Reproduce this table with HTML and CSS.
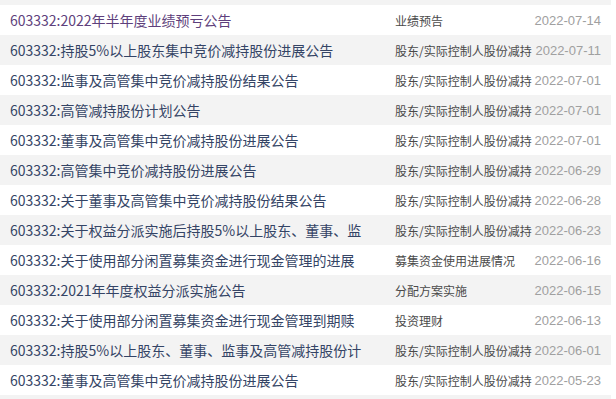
FILE: index.html
```html
<!DOCTYPE html>
<html lang="zh-CN">
<head>
<meta charset="utf-8">
<title>公告列表</title>
<link rel="stylesheet" href="styles.css">
</head>
<body>
<ul class="notice-list">
  <li class="notice"><a class="title visited">603332:2022年半年度业绩预亏公告</a><span class="cat">业绩预告</span><span class="date">2022-07-14</span></li>
  <li class="notice"><a class="title">603332:持股5%以上股东集中竞价减持股份进展公告</a><span class="cat">股东/实际控制人股份减持</span><span class="date">2022-07-11</span></li>
  <li class="notice"><a class="title">603332:监事及高管集中竞价减持股份结果公告</a><span class="cat">股东/实际控制人股份减持</span><span class="date">2022-07-01</span></li>
  <li class="notice"><a class="title">603332:高管减持股份计划公告</a><span class="cat">股东/实际控制人股份减持</span><span class="date">2022-07-01</span></li>
  <li class="notice"><a class="title">603332:董事及高管集中竞价减持股份进展公告</a><span class="cat">股东/实际控制人股份减持</span><span class="date">2022-07-01</span></li>
  <li class="notice"><a class="title">603332:高管集中竞价减持股份进展公告</a><span class="cat">股东/实际控制人股份减持</span><span class="date">2022-06-29</span></li>
  <li class="notice"><a class="title">603332:关于董事及高管集中竞价减持股份结果公告</a><span class="cat">股东/实际控制人股份减持</span><span class="date">2022-06-28</span></li>
  <li class="notice"><a class="title">603332:关于权益分派实施后持股5%以上股东、董事、监</a><span class="cat">股东/实际控制人股份减持</span><span class="date">2022-06-23</span></li>
  <li class="notice"><a class="title">603332:关于使用部分闲置募集资金进行现金管理的进展</a><span class="cat">募集资金使用进展情况</span><span class="date">2022-06-16</span></li>
  <li class="notice"><a class="title">603332:2021年年度权益分派实施公告</a><span class="cat">分配方案实施</span><span class="date">2022-06-15</span></li>
  <li class="notice"><a class="title">603332:关于使用部分闲置募集资金进行现金管理到期赎</a><span class="cat">投资理财</span><span class="date">2022-06-13</span></li>
  <li class="notice"><a class="title">603332:持股5%以上股东、董事、监事及高管减持股份计</a><span class="cat">股东/实际控制人股份减持</span><span class="date">2022-06-01</span></li>
  <li class="notice"><a class="title">603332:董事及高管集中竞价减持股份进展公告</a><span class="cat">股东/实际控制人股份减持</span><span class="date">2022-05-23</span></li>
</ul>
</body>
</html>
```
FILE: styles.css
```css
html, body {
  margin: 0;
  padding: 0;
}
body {
  background: #ffffff;
  padding-top: 5px;
  font-family: "Noto Sans CJK SC", "Noto Sans", sans-serif;
}
.notice-list {
  list-style: none;
  margin: 0;
  padding: 0;
  width: 611px;
  background: #f3f3f3;
  padding-bottom: 4px;
  margin-top: -5px;
  padding-top: 5px;
}
.notice {
  display: flex;
  align-items: center;
  height: 30px;
  padding: 0 10px 0 10px;
  white-space: nowrap;
}
.notice:nth-child(odd) {
  background: #ffffff;
}
.notice:nth-child(even) {
  background: #f3f3f3;
}
.title {
  width: 385px;
  flex: none;
  overflow: hidden;
  font-size: 14px;
  color: #344465;
  text-decoration: none;
}
.title.visited {
  color: #5e3f7c;
}
.cat {
  flex: 1;
  font-size: 12px;
  color: #4a4a4a;
}
.date {
  font-family: "Liberation Sans", Arial, sans-serif;
  font-size: 13px;
  color: #a0a0a0;
}
```
